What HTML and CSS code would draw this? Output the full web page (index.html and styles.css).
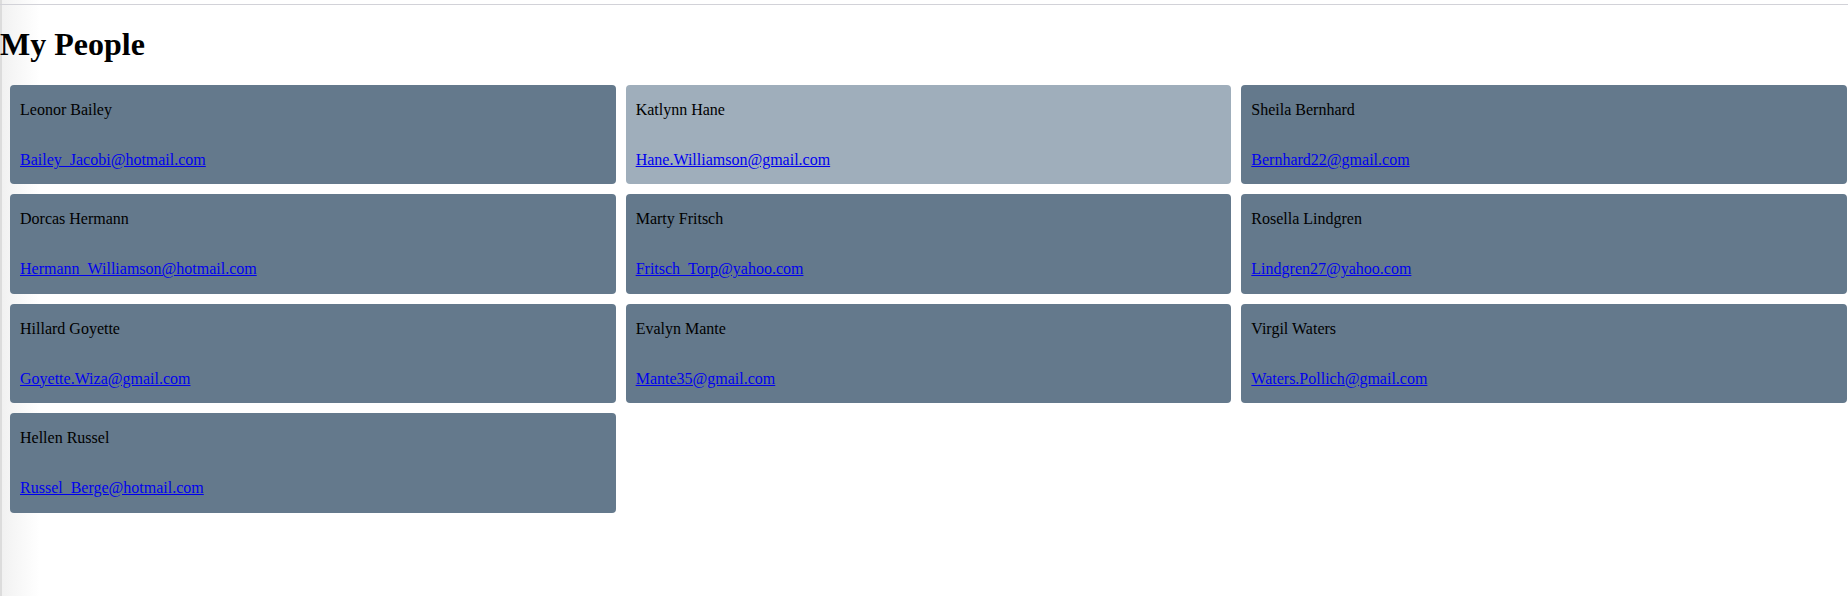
FILE: index.html
```html
<!DOCTYPE html>
<html lang="en">
<head>
<meta charset="utf-8">
<title>My People</title>
<link rel="stylesheet" href="styles.css">
</head>
<body>
<div class="topbar"></div>
<h1 class="title">My People</h1>
<div class="people">
  <div class="card"><p class="name">Leonor Bailey</p><p class="email"><a href="#">Bailey_Jacobi@hotmail.com</a></p></div>
  <div class="card card-active"><p class="name">Katlynn Hane</p><p class="email"><a href="#">Hane.Williamson@gmail.com</a></p></div>
  <div class="card"><p class="name">Sheila Bernhard</p><p class="email"><a href="#">Bernhard22@gmail.com</a></p></div>
  <div class="card"><p class="name">Dorcas Hermann</p><p class="email"><a href="#">Hermann_Williamson@hotmail.com</a></p></div>
  <div class="card"><p class="name">Marty Fritsch</p><p class="email"><a href="#">Fritsch_Torp@yahoo.com</a></p></div>
  <div class="card"><p class="name">Rosella Lindgren</p><p class="email"><a href="#">Lindgren27@yahoo.com</a></p></div>
  <div class="card"><p class="name">Hillard Goyette</p><p class="email"><a href="#">Goyette.Wiza@gmail.com</a></p></div>
  <div class="card"><p class="name">Evalyn Mante</p><p class="email"><a href="#">Mante35@gmail.com</a></p></div>
  <div class="card"><p class="name">Virgil Waters</p><p class="email"><a href="#">Waters.Pollich@gmail.com</a></p></div>
  <div class="card"><p class="name">Hellen Russel</p><p class="email"><a href="#">Russel_Berge@hotmail.com</a></p></div>
</div>
</body>
</html>
```
FILE: styles.css
```css
html, body {
  margin: 0;
  padding: 0;
  min-height: 100%;
}
body {
  font-family: "Liberation Serif", "Times New Roman", serif;
  color: #000;
  background: linear-gradient(to right, #dcdcdc 0, #dcdcdc 2px, #f1f1f1 2px, #f6f6f6 14px, #ffffff 40px);
  min-height: 596px;
}
.topbar {
  height: 4px;
  border-bottom: 1px solid #d2d2d8;
}
.title {
  margin: 22px 0 23px 0;
  font-size: 32px;
  line-height: 35px;
  font-weight: bold;
}
.people {
  display: grid;
  grid-template-columns: repeat(3, 1fr);
  gap: 10px;
  padding: 0 1px 0 10px;
}
.card {
  display: flex;
  flex-direction: column;
  background: #64798c;
  border-radius: 4px;
  padding: 0 10px;
}
.card-active {
  background: #9faebb;
}
.card p {
  margin: 16px 0;
  font-size: 16px;
  line-height: 17.7px;
}
.email a {
  color: #0000ee;
  text-decoration: underline;
}
```
